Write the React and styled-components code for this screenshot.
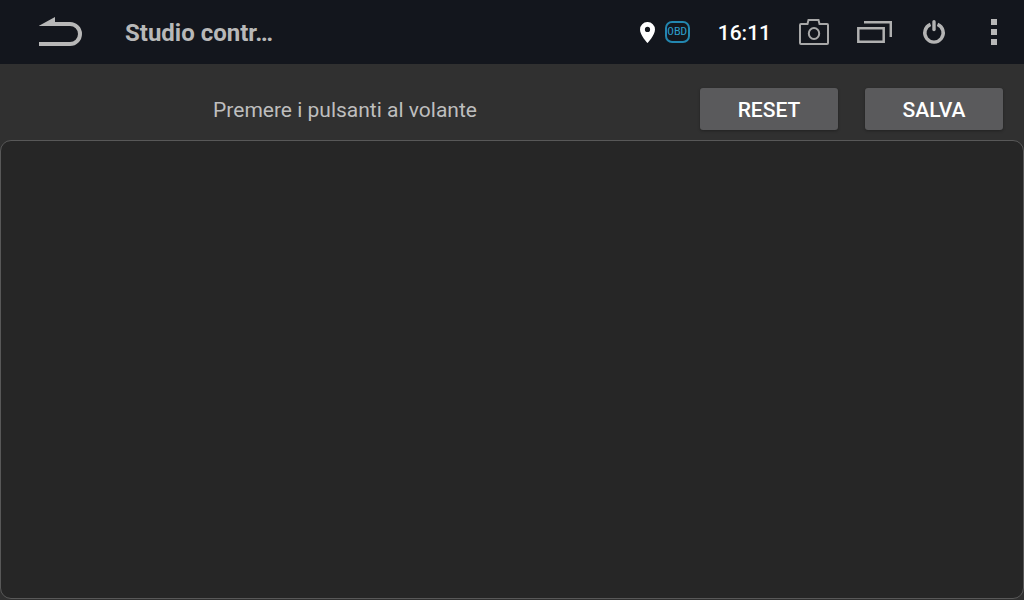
import React from 'react';
import styled, { createGlobalStyle } from 'styled-components';

const GlobalStyle = createGlobalStyle`
  * {
    box-sizing: border-box;
  }

  body {
    margin: 0;
    background: #303030;
    font-family: Roboto, 'Liberation Sans', sans-serif;
  }
`;

const App = () => {
  return (
    <Screen>
      <GlobalStyle />
      <StatusBar>
        <IconButton aria-label="Indietro">
          <svg width="44" height="30" viewBox="0 0 44 30" aria-hidden="true">
            <path d="M1 8.7 17 0v5h-1v4H1z" fill="#b8b8b8" />
            <path d="M10 7h22a10 10 0 0 1 0 20H1" fill="none" stroke="#b8b8b8" strokeWidth="4" />
          </svg>
        </IconButton>
        <Title>Studio contr…</Title>

        <Indicators>
          <svg width="15" height="21" viewBox="0 0 15 21" aria-hidden="true">
            <path
              fill="#fff"
              fillRule="evenodd"
              d="M7.5 0A7.4 7.4 0 0 0 0 7.4C0 13 7.5 21 7.5 21S15 13 15 7.4A7.4 7.4 0 0 0 7.5 0zm0 4.8a2.6 2.6 0 1 1 0 5.2 2.6 2.6 0 0 1 0-5.2z"
            />
          </svg>
          <ObdBadge>OBD</ObdBadge>
        </Indicators>
        <Clock>16:11</Clock>

        <Actions>
          <IconButton aria-label="Cattura schermo">
            <svg width="30" height="26" viewBox="0 0 30 26" aria-hidden="true">
              <g fill="none" stroke="#a8a8a8" strokeWidth="2">
                <path d="M2 5h6.5l1-4h10l1 4H28a1 1 0 0 1 1 1v18a1 1 0 0 1-1 1H2a1 1 0 0 1-1-1V6a1 1 0 0 1 1-1z" />
                <ellipse cx="15" cy="14.5" rx="5.2" ry="5.5" />
              </g>
            </svg>
          </IconButton>
          <IconButton aria-label="App recenti">
            <svg width="35" height="24" viewBox="0 0 35 24" aria-hidden="true">
              <g fill="none" stroke="#b0b0b0" strokeWidth="2.5">
                <path d="M1.3 8.3h25.4v13.4H1.3z" />
                <path d="M7 2.2h26.8V17" />
              </g>
            </svg>
          </IconButton>
          <IconButton aria-label="Spegni">
            <svg width="28" height="24" viewBox="0 0 28 24" aria-hidden="true">
              <g fill="none" stroke="#b4b4b4" strokeWidth="3.4">
                <path d="M10.5 4.4a9.2 9.2 0 1 0 7 0" />
                <path d="M14 1.7V9.5" strokeLinecap="round" />
              </g>
            </svg>
          </IconButton>
          <IconButton aria-label="Menu">
            <svg width="6" height="26" viewBox="0 0 6 26" aria-hidden="true">
              <path d="M0 0h6v6H0zM0 10h6v6H0zM0 20h6v6H0z" fill="#b8b8b8" />
            </svg>
          </IconButton>
        </Actions>
      </StatusBar>

      <Toolbar>
        <Message>Premere i pulsanti al volante</Message>
        <Button>RESET</Button>
        <Button>SALVA</Button>
      </Toolbar>
      <KeyPanel />
    </Screen>
  );
};

const Screen = styled.div`
  min-height: 100vh;
  display: flex;
  flex-direction: column;
`;

const StatusBar = styled.header`
  height: 64px;
  padding: 0 27px 0 38px;
  display: flex;
  align-items: center;
  background: #13161d;
`;

const IconButton = styled.button`
  display: flex;
  flex-shrink: 0;
  padding: 0;
  border: none;
  background: none;
  cursor: pointer;
`;

const Title = styled.h1`
  margin: 0 auto 0 43px;
  padding-top: 2px;
  white-space: nowrap;
  color: #b8b8b8;
  font-size: 24px;
  line-height: 32px;
  font-weight: 700;
`;

const Indicators = styled.div`
  display: flex;
  align-items: center;
  gap: 10px;
`;

const ObdBadge = styled.span`
  width: 25px;
  height: 22px;
  display: flex;
  align-items: center;
  justify-content: center;
  border: 2px solid #2387b0;
  border-radius: 7px;
  color: #2c9cc9;
  font-family: 'DejaVu Sans Mono', monospace;
  font-size: 11px;
  line-height: 16px;
`;

const Clock = styled.time`
  margin: 0 28px;
  padding-top: 2px;
  color: #fff;
  font-size: 21px;
  line-height: 32px;
  font-weight: 500;
`;

const Actions = styled.div`
  display: flex;
  align-items: center;
  gap: 28px;

  ${IconButton}:last-child {
    margin-left: 15px;
  }
`;

const Toolbar = styled.div`
  display: flex;
  align-items: center;
  gap: 27px;
  padding: 24px 21px 10px 17px;
`;

const Message = styled.p`
  flex: 1;
  margin: 0;
  padding-top: 2px;
  text-align: center;
  color: #bebebe;
  font-size: 21px;
  line-height: 32px;
`;

const Button = styled.button`
  width: 138px;
  height: 42px;
  padding: 2px 0 0;
  border: none;
  border-radius: 3px;
  background: #5a5a5c;
  box-shadow: 0 1px 3px rgba(0, 0, 0, 0.3);
  color: #fff;
  font-family: inherit;
  font-size: 21px;
  font-weight: 500;
  cursor: pointer;
`;

const KeyPanel = styled.main`
  flex: 1;
  margin-bottom: 1px;
  border: 1px solid #585858;
  border-radius: 11px;
  background: #262626;
`;

export default App;
